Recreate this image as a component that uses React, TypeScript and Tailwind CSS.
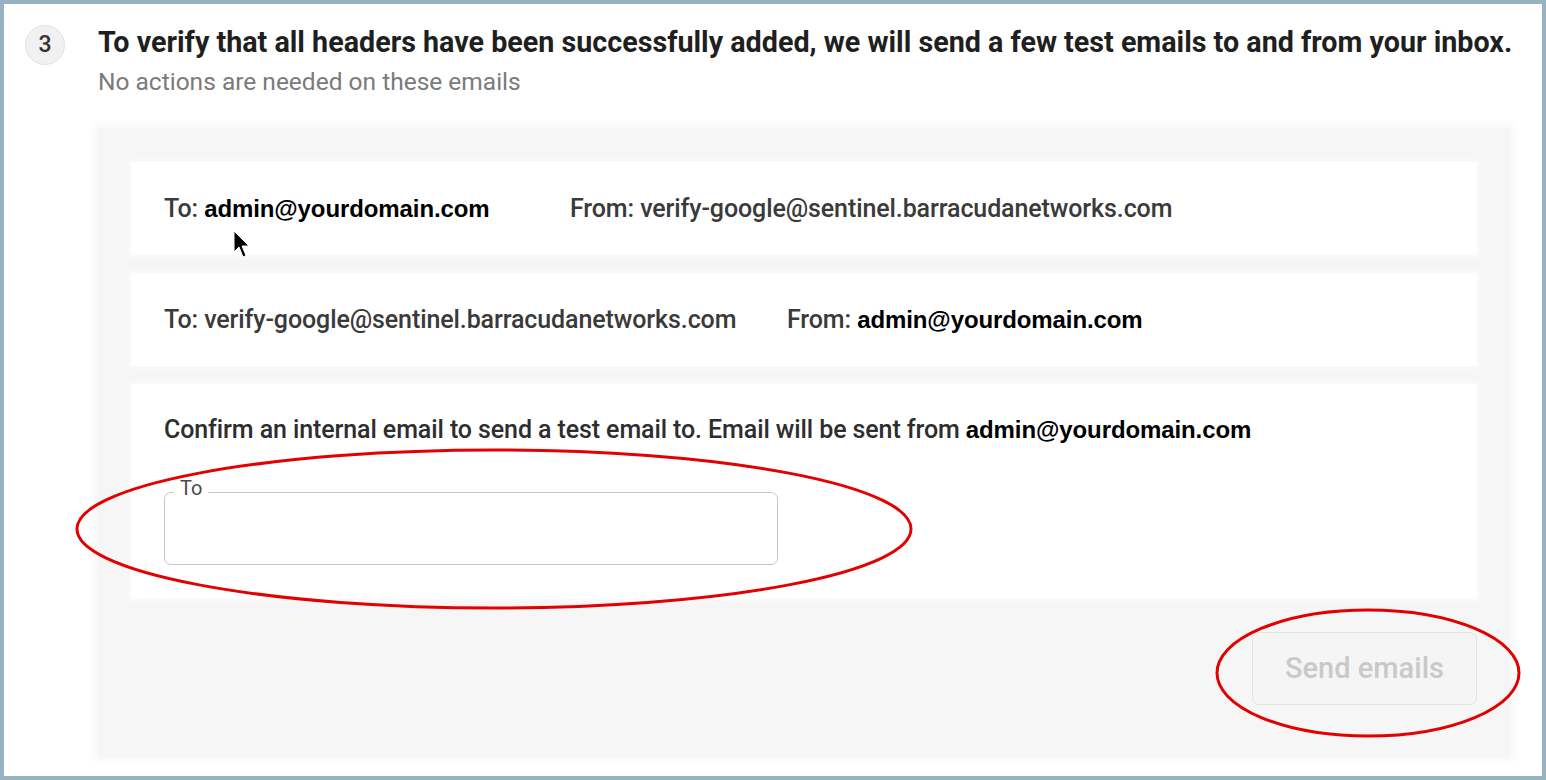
const roboto = { fontFamily: 'Roboto, "Liberation Sans", sans-serif' };

function Cursor() {
  return (
    <svg className="absolute left-[229px] top-[226px]" width="18" height="36" viewBox="0 0 18 36">
      <path d="M1 1 L1 22 L6 17 L10 27 L13 25.5 L9 16 L16 16 Z" fill="#000" stroke="#fff" strokeWidth="1" />
    </svg>
  );
}

function Highlights() {
  return (
    <svg className="absolute inset-0 pointer-events-none" width="1546" height="780">
      <ellipse cx="490" cy="525" rx="417" ry="79" fill="none" stroke="#e30000" strokeWidth="3" />
      <ellipse cx="1364" cy="669" rx="151" ry="63" fill="none" stroke="#e30000" strokeWidth="3" />
    </svg>
  );
}

function Addr({ children }: { children: React.ReactNode }) {
  return (
    <span className="text-[24px] font-bold text-black" style={{ fontFamily: '"Liberation Sans", Arial, sans-serif' }}>
      {children}
    </span>
  );
}

export default function App() {
  return (
    <div className="relative w-[1546px] h-[780px] bg-white border-4 border-[#94b2c0] overflow-hidden" style={roboto}>
      {/* step header */}
      <div className="flex items-start pl-[21px] pt-[20px]">
        <div className="mt-[1px] w-10 h-10 shrink-0 rounded-full bg-[#f1f1f1] border border-[#e2e2e2] flex items-center justify-center text-[23px] font-medium text-[#333]">
          3
        </div>
        <div className="ml-[33px]">
          <div className="text-[28.7px] leading-[36px] font-bold text-[#1f1f1f] whitespace-nowrap">
            To verify that all headers have been successfully added, we will send a few test emails to and from your inbox.
          </div>
          <div className="mt-[7px] text-[24.5px] leading-[30px] text-[#7b7b7b]">No actions are needed on these emails</div>
        </div>
      </div>

      {/* grey panel */}
      <div className="ml-[94px] mt-[31px] w-[1412px] h-[629px] bg-[#f6f6f6] shadow-[0_0_8px_4px_#f8f8f8] px-[33px] pt-[34px] flex flex-col">
        <div className="h-[93px] bg-white shadow-[0_0_4px_2px_#fbfbfb] flex items-center pl-[33px] text-[25px] text-[#3a3a3a] font-medium tracking-[-0.1px]">
          <span className="w-[406px]">
            To: <Addr>admin@yourdomain.com</Addr>
          </span>
          <span>From: verify-google@sentinel.barracudanetworks.com</span>
        </div>

        <div className="mt-[18px] h-[93px] bg-white shadow-[0_0_4px_2px_#fbfbfb] flex items-center pl-[33px] text-[25px] text-[#3a3a3a] font-medium tracking-[-0.1px]">
          <span className="w-[623px]">To: verify-google@sentinel.barracudanetworks.com</span>
          <span>
            From: <Addr>admin@yourdomain.com</Addr>
          </span>
        </div>

        <div className="mt-[18px] h-[215px] bg-white shadow-[0_0_4px_2px_#fbfbfb] pl-[33px] pt-[31px]">
          <div className="text-[25px] leading-[30px] text-[#2e2e2e] font-medium tracking-[-0.1px]">
            Confirm an internal email to send a test email to. Email will be sent from <Addr>admin@yourdomain.com</Addr>
          </div>
          <div className="relative mt-[47px] w-[614px] h-[73px] rounded-[7px] border border-[#c6c6c6]">
            <span className="absolute -top-[17px] left-[9px] px-[6px] bg-white text-[20px] leading-[24px] text-[#4a4a4a]">To</span>
          </div>
        </div>

        <div className="flex justify-end mt-[33px]">
          <button className="w-[225px] h-[73px] rounded-[7px] border border-[#e3e3e3] bg-[#f5f5f5] text-[29px] font-medium text-[#c9c9c9]">
            Send emails
          </button>
        </div>
      </div>

      <Cursor />
      <Highlights />
    </div>
  );
}
